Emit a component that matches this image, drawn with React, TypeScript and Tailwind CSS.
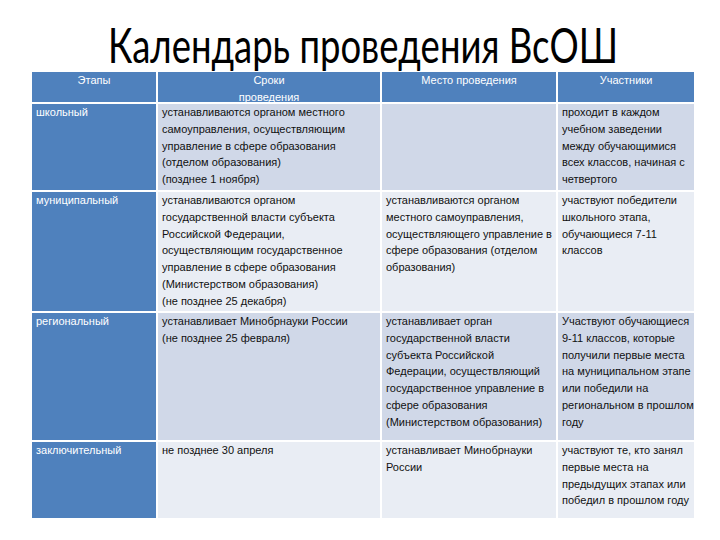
const HEAD = ['Этапы', 'Сроки\nпроведения', 'Место проведения', 'Участники']

const ROWS = [
  {
    h: 'h-[86px]',
    bg: 'bg-[#d0d8e8]',
    cells: [
      'школьный',
      'устанавливаются органом местного\nсамоуправления, осуществляющим\nуправление в сфере образования\n(отделом образования)\n(позднее 1 ноября)',
      '',
      'проходит в каждом\nучебном заведении\nмежду обучающимися\nвсех классов, начиная с\nчетвертого',
    ],
  },
  {
    h: 'h-[119px]',
    bg: 'bg-[#e9edf4]',
    cells: [
      'муниципальный',
      'устанавливаются органом\nгосударственной власти субъекта\nРоссийской Федерации,\nосуществляющим государственное\nуправление в сфере образования\n(Министерством образования)\n(не позднее 25 декабря)',
      'устанавливаются органом\nместного самоуправления,\nосуществляющего управление в\nсфере образования (отделом\nобразования)',
      'участвуют победители\nшкольного этапа,\nобучающиеся 7-11\nклассов',
    ],
  },
  {
    h: 'h-[127px]',
    bg: 'bg-[#d0d8e8]',
    cells: [
      'региональный',
      'устанавливает Минобрнауки России\n(не позднее 25 февраля)',
      'устанавливает орган\nгосударственной власти\nсубъекта Российской\nФедерации, осуществляющий\nгосударственное управление в\nсфере образования\n(Министерством образования)',
      'Участвуют обучающиеся\n9-11 классов, которые\nполучили первые места\nна муниципальном этапе\nили победили на\nрегиональном в прошлом\nгоду',
    ],
  },
  {
    h: 'h-[76px]',
    bg: 'bg-[#e9edf4]',
    cells: [
      'заключительный',
      'не позднее 30 апреля',
      'устанавливает Минобрнауки\nРоссии',
      'участвуют те, кто занял\nпервые места на\nпредыдущих этапах или\nпобедил в прошлом году',
    ],
  },
]

export default function App() {
  return (
    <div className="w-[720px] h-[540px] bg-white overflow-hidden font-['Liberation_Sans',sans-serif]">
      <h1 className="pt-[23px] h-[72px] text-center text-[36.5px] leading-[52px] font-normal text-black font-['Lato',sans-serif] pl-[6px]">
        <span className="inline-block scale-y-[1.3] origin-[50%_78%]">Календарь проведения ВсОШ</span>
      </h1>
      <div className="ml-[32px] w-[662px] grid grid-cols-[124px_222px_174px_136px] gap-[2px] text-[11px] leading-[16.8px]">
        {HEAD.map((t) => (
          <div key={t} className="h-[30px] bg-[#4f81bd] text-white text-center whitespace-pre-line">
            {t}
          </div>
        ))}
        {ROWS.map((r) =>
          r.cells.map((c, i) => (
            <div
              key={r.cells[0] + i}
              className={`${r.h} whitespace-pre-line pl-[4px] ${
                i === 0 ? 'bg-[#4f81bd] text-white' : `${r.bg} text-[#111]`
              }`}
            >
              {c}
            </div>
          ))
        )}
      </div>
    </div>
  )
}
